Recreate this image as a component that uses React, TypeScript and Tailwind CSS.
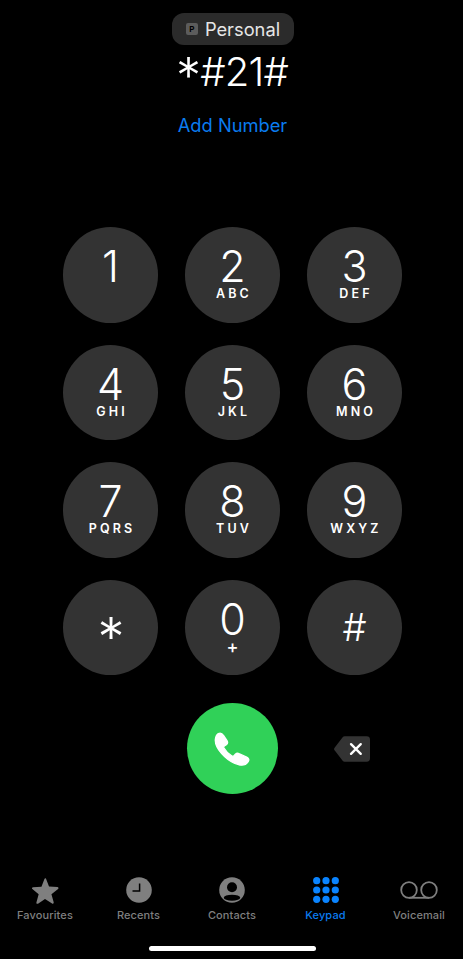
import React from 'react';

const keys = [
  { digit: '1', letters: '' },
  { digit: '2', letters: 'ABC' },
  { digit: '3', letters: 'DEF' },
  { digit: '4', letters: 'GHI' },
  { digit: '5', letters: 'JKL' },
  { digit: '6', letters: 'MNO' },
  { digit: '7', letters: 'PQRS' },
  { digit: '8', letters: 'TUV' },
  { digit: '9', letters: 'WXYZ' },
  { digit: '*', letters: '' },
  { digit: '0', letters: '+' },
  { digit: '#', letters: '' },
];

function Key({ digit, letters }: { digit: string; letters: string }) {
  return (
    <button className="w-[95.500px] h-[95.500px] rounded-full bg-[#333333] flex flex-col items-center text-white">
      {digit === '*' && <span className="mt-[31px] ml-[1px] h-[34px] leading-[34px] text-[54px] font-light translate-y-[9px]">*</span>}
      {digit === '#' && <span className="mt-[30px] h-[34px] leading-[34px] text-[38px] font-light">#</span>}
      {digit !== '*' && digit !== '#' && <span className="mt-[22px] h-[34px] leading-[34px] text-[43px] font-light">{digit}</span>}
      {letters && (
        <span className={letters === '+' ? 'mt-[4px] text-[18px] leading-[14px] font-medium' : 'mt-[4px] pl-[3px] text-[12.500px] leading-[14px] font-semibold tracking-[0.25em]'}>
          {letters}
        </span>
      )}
    </button>
  );
}

function StarIcon() {
  return (
    <svg width="28" height="27" viewBox="0 0 30 28" fill="#7f7f7f">
      <path d="M15 .6c.5 0 .9.3 1.1.8l3.200 8.400 9 .4c.5 0 .9.4 1.100.8.1.5 0 1-.4 1.300l-7.100 5.600 2.400 8.700c.1.5 0 1-.4 1.300-.4.3-.9.3-1.300 0L15 23.100l-7.500 5c-.4.3-.9.3-1.300 0-.4-.3-.6-.8-.4-1.300l2.400-8.700L1.500 12.500c-.4-.3-.5-.8-.4-1.300.2-.4.6-.8 1.100-.8l9-.4 3.200-8.400c.2-.5.6-.8 1.100-.8z" />
    </svg>
  );
}

function ClockIcon() {
  return (
    <svg width="26" height="26" viewBox="0 0 26 26">
      <circle cx="13" cy="13" r="12.800" fill="#7f7f7f" />
      <path d="M13.600 6.500v7.500H6.500" fill="none" stroke="#000" strokeWidth="1.500" />
    </svg>
  );
}

function ContactIcon() {
  return (
    <svg width="26" height="26" viewBox="0 0 26 26">
      <circle cx="13" cy="13" r="12.800" fill="#7f7f7f" />
      <circle cx="13" cy="10.300" r="5" fill="#000" />
      <ellipse cx="13" cy="20.700" rx="8.200" ry="3" fill="#000" />
    </svg>
  );
}

function KeypadIcon() {
  const dots = [3.700, 13, 22.300];
  return (
    <svg width="26" height="26" viewBox="0 0 26 26" fill="#0a84ff">
      {dots.map((y) => dots.map((x) => <circle key={`${x}-${y}`} cx={x} cy={y} r="3.600" />))}
    </svg>
  );
}

function VoicemailIcon() {
  return (
    <svg width="38" height="18" viewBox="0 0 38 18" fill="none" stroke="#7f7f7f" strokeWidth="1.800">
      <circle cx="9" cy="9" r="7.800" />
      <circle cx="29" cy="9" r="7.800" />
      <path d="M9 16.800h20" />
    </svg>
  );
}

const tabs = [
  { label: 'Favourites', icon: <StarIcon /> },
  { label: 'Recents', icon: <ClockIcon /> },
  { label: 'Contacts', icon: <ContactIcon /> },
  { label: 'Keypad', icon: <KeypadIcon />, active: true },
  { label: 'Voicemail', icon: <VoicemailIcon /> },
];

export default function App() {
  return (
    <div className="w-[463px] h-[959px] bg-black text-white flex flex-col items-center overflow-hidden font-['Inter',sans-serif]">
      {/* SIM pill */}
      <div className="mt-[13px] ml-[3px] w-[122px] h-[32px] rounded-[12px] bg-[#2b2b2b] flex items-center justify-center gap-[7px]">
        <span className="w-[12px] h-[12px] rounded-[2px] bg-[#5c5c5c] text-black text-[8px] leading-[12px] font-bold text-center">P</span>
        <span className="text-[18.300px] leading-[24px] font-normal text-[#e6e6e6]">Personal</span>
      </div>

      <div className="mt-[3px] ml-[1px] h-[48px] text-[40px] leading-[48px] font-light tracking-[-0.02em] whitespace-nowrap">
        <span className="inline-block leading-[0px] text-[50px] translate-y-[8px]">*</span>#21#
      </div>

      <div className="mt-[17px] ml-[2px] h-[24px] text-[18.300px] leading-[24px] text-[#0a7cf0]">Add Number</div>

      {/* Keypad */}
      <div className="mt-[90px] ml-[2px] grid grid-cols-3 gap-x-[26.500px] gap-y-[22px]">
        {keys.map((k) => (
          <Key key={k.digit} digit={k.digit} letters={k.letters} />
        ))}
      </div>

      {/* Call row */}
      <div className="mt-[28px] ml-[2px] w-[340px] h-[91px] grid grid-cols-3 gap-x-[26px] items-center justify-items-center">
        <div />
        <button className="w-[91px] h-[91px] rounded-full bg-[#30d158] flex items-center justify-center">
          <svg width="55" height="48" viewBox="0 0 165 144" fill="#fff" stroke="#fff" strokeWidth="4" strokeLinejoin="round">
            <path d="M40 26C46 23 52 26 56 32L66 47C69 52 68 56 64 59L58 63C56 65 56 67 57 69C62 78 72 88 81 93C83 94 85 94 87 92L91 88C94 85 98 84 102 86L125 96C131 99 133 104 130 109C125 117 116 122 105 120C85 116 64 102 50 86C38 72 30 58 31 44C32 34 35 29 40 26Z" />
          </svg>
        </button>
        <svg className="justify-self-start ml-[27px]" width="36" height="26" viewBox="0 0 37 26" fill="none">
          <path d="M11 0h22.500A3.500 3.500 0 0 1 37 3.500v19a3.500 3.500 0 0 1-3.500 3.500H11a3 3 0 0 1-2.100-.9L1 14.800a2.500 2.500 0 0 1 0-3.600L8.900.9A3 3 0 0 1 11 0z" fill="#333333" />
          <path d="M17.500 8l10 10M27.500 8l-10 10" stroke="#fff" strokeWidth="2.400" strokeLinecap="round" />
        </svg>
      </div>

      {/* Tab bar */}
      <div className="mt-auto w-[464px] self-start flex justify-between">
        {tabs.map((t) => (
          <div key={t.label} className="w-[90px] flex flex-col items-center">
            <div className="h-[28px] flex items-center justify-center">{t.icon}</div>
            <span className={`mt-[3px] text-[11px] leading-[16px] font-medium tracking-[0.01em] ${t.active ? 'text-[#0a7cf0]' : 'text-[#7f7f7f]'}`}>{t.label}</span>
          </div>
        ))}
      </div>

      {/* Home indicator */}
      <div className="mt-[23px] mb-[8px] ml-[2px] w-[167px] h-[5px] rounded-full bg-white" />
    </div>
  );
}
